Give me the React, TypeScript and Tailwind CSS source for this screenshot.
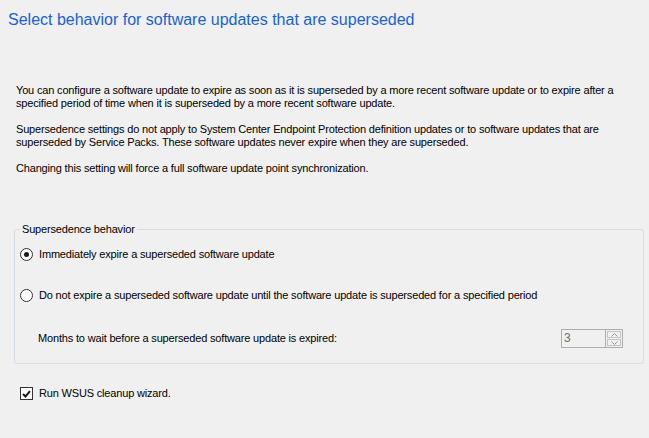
import { useState } from "react";

function Radio({ checked, onClick }: { checked: boolean; onClick: () => void }) {
  return (
    <span
      onClick={onClick}
      className="flex h-[13px] w-[13px] shrink-0 items-center justify-center rounded-full border border-[#333333] bg-white"
    >
      {checked && <span className="h-[5px] w-[5px] rounded-full bg-[#1a1a1a]" />}
    </span>
  );
}

export default function App() {
  const [mode, setMode] = useState<"now" | "later">("now");
  const [cleanup, setCleanup] = useState(true);

  return (
    <div className="flex h-[438px] w-[649px] flex-col overflow-hidden bg-[#f0f0f0] font-['Liberation_Sans',Tahoma,sans-serif] text-[11px] leading-[13px] tracking-[-0.17px] text-black">
      <h1 className="pl-[8px] pt-[10px] text-[16px] leading-[20px] tracking-normal text-[#1862d6]">
        Select behavior for software updates that are superseded
      </h1>

      <div className="mt-[54px] flex flex-col gap-[13px] pl-[16px]">
        <p>
          You can configure a software update to expire as soon as it is superseded by a more recent software update or to expire after a
          <br />
          specified period of time when it is superseded by a more recent software update.
        </p>
        <p>
          Supersedence settings do not apply to System Center Endpoint Protection definition updates or to software updates that are
          <br />
          superseded by Service Packs. These software updates never expire when they are superseded.
        </p>
        <p>Changing this setting will force a full software update point synchronization.</p>
      </div>

      <fieldset className="ml-[14px] mt-[48px] h-[141px] w-[630px] rounded-[3px] border border-[#d5dde4] pl-[5px] pr-[20px]">
        <legend className="px-[2px]">Supersedence behavior</legend>

        <div className="mt-[12px] flex items-center gap-[6px]">
          <Radio checked={mode === "now"} onClick={() => setMode("now")} />
          <span>Immediately expire a superseded software update</span>
        </div>

        <div className="mt-[28px] flex items-center gap-[6px]">
          <Radio checked={mode === "later"} onClick={() => setMode("later")} />
          <span>Do not expire a superseded software update until the software update is superseded for a specified period</span>
        </div>

        <div className="mt-[27px] flex items-center justify-between pl-[18px]">
          <span>Months to wait before a superseded software update is expired:</span>
          <div className="flex h-[19px] w-[62px] border border-[#adadad] bg-[#f0f0f0]">
            <span className="flex-1 pl-[2px] text-[12px] leading-[17px] text-[#6d6d6d]">3</span>
            <div className="flex w-[17px] flex-col gap-[1px] border-l border-[#adadad] p-[1px]">
              <span className="flex flex-1 items-center justify-center border border-[#c4c4c4] text-[#9a9a9a]">
                <svg width="7" height="4" viewBox="0 0 7 4" fill="none" stroke="currentColor">
                  <path d="M0.5 3.5 L3.5 0.5 L6.5 3.5" />
                </svg>
              </span>
              <span className="flex flex-1 items-center justify-center border border-[#c4c4c4] text-[#9a9a9a]">
                <svg width="7" height="4" viewBox="0 0 7 4" fill="none" stroke="currentColor">
                  <path d="M0.5 0.5 L3.5 3.5 L6.5 0.5" />
                </svg>
              </span>
            </div>
          </div>
        </div>
      </fieldset>

      <label className="ml-[20px] mt-[23px] flex items-center gap-[6px]" onClick={() => setCleanup(!cleanup)}>
        <span className="flex h-[13px] w-[13px] items-center justify-center border border-[#333333] bg-white">
          {cleanup && (
            <svg width="9" height="8" viewBox="0 0 9 8" fill="none" stroke="#1a1a1a" strokeWidth="2">
              <path d="M1 4 L3.5 6.5 L8 1.2" />
            </svg>
          )}
        </span>
        <span>Run WSUS cleanup wizard.</span>
      </label>
    </div>
  );
}
